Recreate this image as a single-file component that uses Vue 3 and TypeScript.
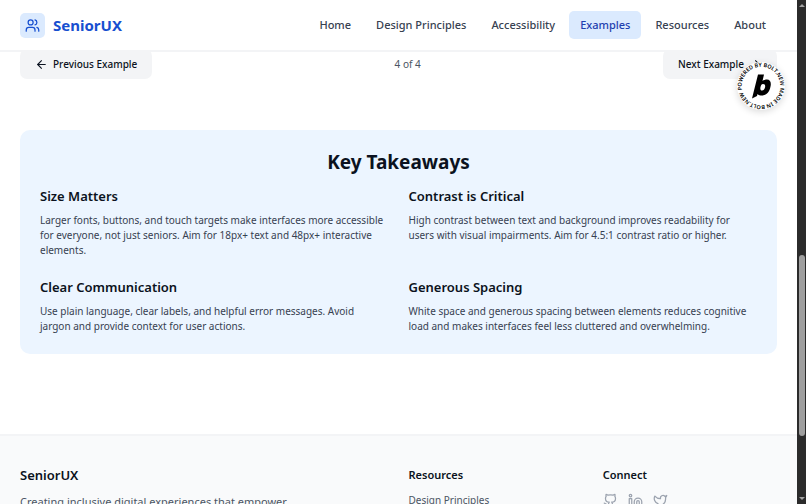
<script setup lang="ts">
interface NavItem {
  label: string
  href: string
  active?: boolean
}

interface Takeaway {
  title: string
  text: string
}

const navItems: NavItem[] = [
  { label: 'Home', href: '#home' },
  { label: 'Design Principles', href: '#principles' },
  { label: 'Accessibility', href: '#accessibility' },
  { label: 'Examples', href: '#examples', active: true },
  { label: 'Resources', href: '#resources' },
  { label: 'About', href: '#about' },
]

const takeaways: Takeaway[] = [
  {
    title: 'Size Matters',
    text: 'Larger fonts, buttons, and touch targets make interfaces more accessible for everyone, not just seniors. Aim for 18px+ text and 48px+ interactive elements.',
  },
  {
    title: 'Contrast is Critical',
    text: 'High contrast between text and background improves readability for users with visual impairments. Aim for 4.5:1 contrast ratio or higher.',
  },
  {
    title: 'Clear Communication',
    text: 'Use plain language, clear labels, and helpful error messages. Avoid jargon and provide context for user actions.',
  },
  {
    title: 'Generous Spacing',
    text: 'White space and generous spacing between elements reduces cognitive load and makes interfaces feel less cluttered and overwhelming.',
  },
]

const current = 4
const total = 4
</script>

<template>
  <div class="window">
    <div class="page">
      <header class="header">
        <a class="brand" href="#home">
          <span class="brand-mark">
            <svg class="icon" viewBox="0 0 24 24" aria-hidden="true">
              <path d="M16 21v-2a4 4 0 0 0-4-4H6a4 4 0 0 0-4 4v2" />
              <circle cx="9" cy="7" r="4" />
              <path d="M22 21v-2a4 4 0 0 0-3-3.87" />
              <path d="M16 3.13a4 4 0 0 1 0 7.75" />
            </svg>
          </span>
          <span class="brand-name">SeniorUX</span>
        </a>
        <nav class="nav">
          <a
            v-for="item in navItems"
            :key="item.label"
            :href="item.href"
            class="nav-link"
            :class="{ active: item.active }"
          >{{ item.label }}</a>
        </nav>
      </header>

      <main class="main">
        <div class="pager">
          <button type="button" class="pager-button">
            <svg class="icon arrow" viewBox="0 0 24 24" aria-hidden="true">
              <path d="m12 19-7-7 7-7" />
              <path d="M19 12H5" />
            </svg>
            Previous Example
          </button>
          <span class="pager-count">{{ current }} of {{ total }}</span>
          <button type="button" class="pager-button">
            Next Example
            <svg class="icon arrow" viewBox="0 0 24 24" aria-hidden="true">
              <path d="M5 12h14" />
              <path d="m12 5 7 7-7 7" />
            </svg>
          </button>
        </div>

        <section class="takeaways">
          <h2 class="takeaways-title">Key Takeaways</h2>
          <div class="takeaways-grid">
            <article v-for="item in takeaways" :key="item.title">
              <h3 class="takeaway-title">{{ item.title }}</h3>
              <p class="takeaway-text">{{ item.text }}</p>
            </article>
          </div>
        </section>
      </main>

      <footer class="footer">
        <div class="footer-about">
          <h3 class="footer-brand">SeniorUX</h3>
          <p class="footer-text">Creating inclusive digital experiences that empower</p>
        </div>
        <div>
          <h4 class="footer-title">Resources</h4>
          <a class="footer-link" href="#principles">Design Principles</a>
        </div>
        <div>
          <h4 class="footer-title">Connect</h4>
          <div class="social">
            <a href="#github" aria-label="GitHub">
              <svg class="icon" viewBox="0 0 24 24" aria-hidden="true">
                <path d="M15 22v-4a4.8 4.8 0 0 0-1-3.5c3 0 6-2 6-5.5.08-1.25-.27-2.48-1-3.5.28-1.15.28-2.35 0-3.5 0 0-1 0-3 1.5-2.64-.5-5.36-.5-8 0C6 2 5 2 5 2c-.3 1.15-.3 2.35 0 3.5A5.403 5.403 0 0 0 4 9c0 3.5 3 5.5 6 5.5-.39.49-.68 1.05-.85 1.65-.17.6-.22 1.23-.15 1.85v4" />
                <path d="M9 18c-4.51 2-5-2-7-2" />
              </svg>
            </a>
            <a href="#linkedin" aria-label="LinkedIn">
              <svg class="icon" viewBox="0 0 24 24" aria-hidden="true">
                <path d="M16 8a6 6 0 0 1 6 6v7h-4v-7a2 2 0 0 0-2-2 2 2 0 0 0-2 2v7h-4v-7a6 6 0 0 1 6-6z" />
                <rect width="4" height="12" x="2" y="9" />
                <circle cx="4" cy="4" r="2" />
              </svg>
            </a>
            <a href="#twitter" aria-label="Twitter">
              <svg class="icon" viewBox="0 0 24 24" aria-hidden="true">
                <path d="M22 4s-.7 2.1-2 3.4c1.6 10-9.4 17.3-18 11.6 2.2.1 4.4-.6 6-2C3 15.5.5 9.6 3 5c2.2 2.6 5.6 4.1 9 4-.9-4.2 4-6.6 7-3.8 1.1 0 3-1.2 3-1.2z" />
              </svg>
            </a>
          </div>
        </div>
      </footer>

      <a class="badge" href="#bolt" aria-label="Powered by Bolt.new">
        <svg viewBox="0 0 96 96" aria-hidden="true">
          <defs>
            <path
              id="badge-ring"
              d="M10.3 56 A38.5 38.5 0 0 1 85.7 40 A38.5 38.5 0 0 1 10.3 56 A38.5 38.5 0 0 1 9.5 48"
            />
          </defs>
          <text class="badge-text">
            <textPath href="#badge-ring">POWERED BY BOLT.NEW MADE IN BOLT.NEW</textPath>
          </text>
          <path
            fill-rule="evenodd"
            d="M42 25H54L51 38C53 36 57 35 60 35C66 35 69 40 67 49C65 60 59 67 50 67C46 67 43 66 41 64L40 68L30 73ZM52 44C49 44 48 46 47 50C46 54 47 57 50 57C53 57 55 55 56 51C57 47 56 44 52 44Z"
          />
        </svg>
      </a>
    </div>

    <div class="scrollbar" aria-hidden="true">
      <span class="scroll-arrow up"></span>
      <div class="scroll-track">
        <span class="scroll-before"></span>
        <span class="scroll-thumb"></span>
        <span class="scroll-after"></span>
      </div>
      <span class="scroll-arrow down"></span>
    </div>
  </div>
</template>

<style>
body {
  margin: 0;
  background: #ffffff;
}
</style>

<style scoped>
.window {
  display: flex;
  height: 100vh;
  overflow: hidden;
  font-family: 'Noto Sans', sans-serif;
  color: #0b1220;
}

.page {
  position: relative;
  flex: 1;
  min-width: 0;
  overflow: hidden;
}

h2,
h3,
h4,
p {
  margin: 0;
}

a {
  color: inherit;
  text-decoration: none;
}

.icon {
  display: block;
  width: 15px;
  height: 15px;
  fill: none;
  stroke: currentColor;
  stroke-width: 2;
  stroke-linecap: round;
  stroke-linejoin: round;
}

.header {
  position: relative;
  z-index: 1;
  display: flex;
  align-items: center;
  justify-content: space-between;
  padding: 11px 20px;
  background: #ffffff;
  border-bottom: 2px solid #f3f4f6;
}

.brand {
  display: flex;
  align-items: center;
  gap: 8px;
}

.brand-mark {
  padding: 5px;
  border-radius: 5px;
  background: #dbeafe;
  color: #174fd0;
}

.brand-name {
  font-size: 15px;
  line-height: 20px;
  font-weight: 700;
  color: #174fd0;
}

.nav {
  display: flex;
  gap: 3px;
}

.nav-link {
  padding: 5px 11px;
  border-radius: 5px;
  font-size: 11px;
  line-height: 18px;
  font-weight: 500;
  color: #374151;
}

.nav-link.active {
  background: #dbeafe;
  color: #1e40af;
}

.main {
  margin-top: -3px;
  padding: 0 20px 80px;
}

.pager {
  display: flex;
  align-items: center;
  justify-content: space-between;
}

.pager-button {
  display: flex;
  align-items: center;
  gap: 5px;
  padding: 7px 15px;
  border: 0;
  border-radius: 7px;
  background: #f3f4f6;
  color: #0b1220;
  font-family: inherit;
  font-size: 10px;
  line-height: 16px;
  font-weight: 500;
}

.arrow {
  width: 13px;
  height: 13px;
}

.pager-count {
  font-size: 10px;
  line-height: 16px;
  color: #4b5563;
}

.takeaways {
  margin-top: 51px;
  padding: 20px;
  border-radius: 10px;
  background: #ecf5ff;
}

.takeaways-title {
  margin-bottom: 12px;
  font-size: 19px;
  line-height: 25px;
  font-weight: 700;
  text-align: center;
}

.takeaways-grid {
  display: grid;
  grid-template-columns: 1fr 1fr;
  gap: 20px;
}

.takeaway-title {
  margin-bottom: 8px;
  font-size: 13px;
  line-height: 18px;
  font-weight: 600;
}

.takeaway-text {
  padding-right: 2px;
  font-size: 10px;
  line-height: 15px;
  color: #374151;
}

.footer {
  display: grid;
  grid-template-columns: repeat(4, 1fr);
  gap: 20px;
  padding: 30px 20px;
  border-top: 2px solid #f3f4f6;
  background: #f9fafb;
}

.footer-about {
  grid-column: span 2;
}

.footer-brand,
.footer-title {
  margin-bottom: 9px;
  line-height: 18px;
}

.footer-brand {
  font-size: 13px;
  font-weight: 600;
}

.footer-title {
  font-size: 11px;
  font-weight: 600;
}

.footer-text {
  font-size: 11px;
  line-height: 18px;
  color: #4b5563;
}

.footer-link {
  display: block;
  font-size: 10px;
  line-height: 15px;
  color: #4b5563;
}

.social {
  display: flex;
  gap: 10px;
  color: #9ca3af;
}

.badge {
  position: absolute;
  top: 62px;
  right: 12px;
  z-index: 2;
  width: 48px;
  height: 48px;
  border-radius: 50%;
  background: #ffffff;
  box-shadow: 0 2px 7px rgba(0, 0, 0, 0.14);
}

.badge svg {
  display: block;
  width: 100%;
  height: 100%;
}

.badge-text {
  font-size: 11px;
  font-weight: 600;
}

.scrollbar {
  display: flex;
  flex-direction: column;
  width: 9px;
  background: #2b2b2b;
}

.scroll-arrow {
  height: 3px;
  margin: 4px auto;
  border-left: 3px solid transparent;
  border-right: 3px solid transparent;
  box-sizing: border-box;
}

.scroll-arrow.up {
  border-bottom: 3px solid #a3a3a3;
}

.scroll-arrow.down {
  border-top: 3px solid #a3a3a3;
}

.scroll-track {
  display: flex;
  flex: 1;
  flex-direction: column;
  align-items: center;
}

.scroll-before {
  flex: 244;
}

.scroll-thumb {
  flex: 181;
  width: 6px;
  border-radius: 3px;
  background: #9f9f9f;
}

.scroll-after {
  flex: 57;
}
</style>
